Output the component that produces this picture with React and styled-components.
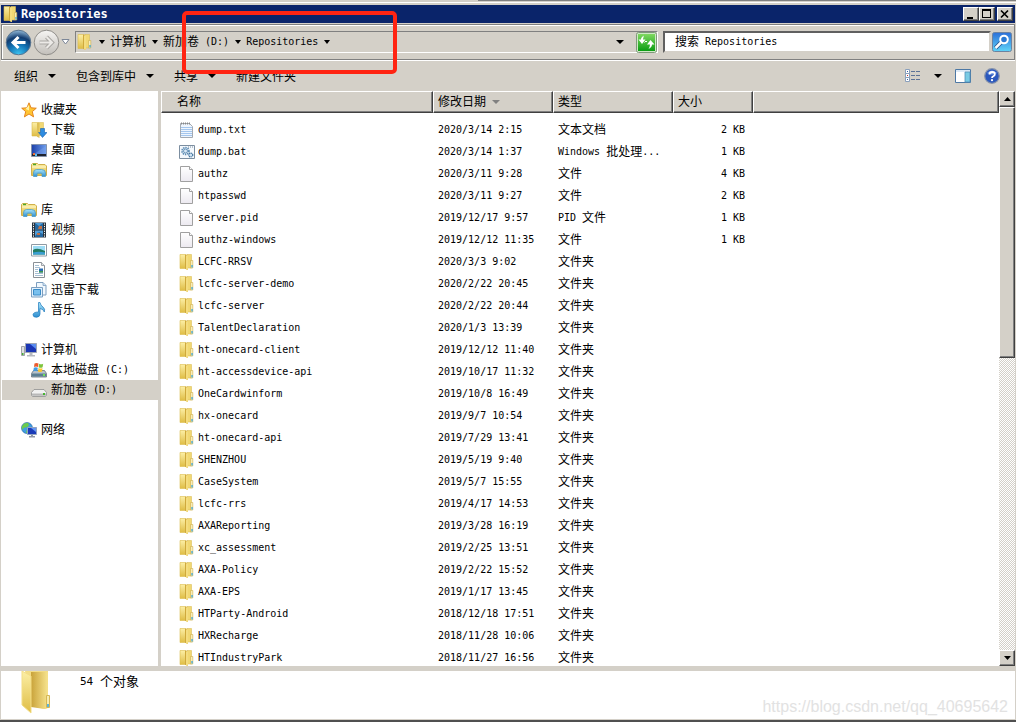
import React, { useState } from "react";
import styled, { createGlobalStyle, css } from "styled-components";

const face = "#d4d0c8";
const latin = `"DejaVu Sans Mono", "Noto Sans CJK SC", monospace`;
const cjk = `"Noto Sans CJK SC", sans-serif`;

const raised = css`
  border: 1px solid;
  border-color: #fff #404040 #404040 #fff;
  box-shadow: inset -1px -1px 0 #808080;
`;

const GlobalStyle = createGlobalStyle`
  * {
    box-sizing: border-box;
  }
  body {
    margin: 0;
    background: #fff;
    color: #000;
    font: 10px/20px ${latin};
  }
  button {
    padding: 0;
    border: 0;
    background: none;
    color: inherit;
    font: inherit;
  }
  svg {
    display: block;
    flex: none;
  }
`;

const Han = styled.span`
  font-family: ${cjk};
  font-size: ${({ $size }) => $size}px;
  line-height: 1;
  vertical-align: -1px;
`;

// half-width latin next to full-width chinese, like the system bitmap font
const Text = ({ children, size = 12 }) =>
  children
    .split(/([\u4e00-\u9fff]+)/)
    .map((part, i) => (i % 2 ? <Han key={i} $size={size}>{part}</Han> : part));

/* ---------- icons ---------- */

const HiddenSvg = styled.svg`
  position: absolute;
`;

const Gradient = ({ id, from, to, flat }) => (
  <linearGradient id={id} x1="0" y1="0" x2={flat ? 1 : 0} y2={flat ? 0 : 1}>
    <stop offset="0" stopColor={from} />
    <stop offset="1" stopColor={to} />
  </linearGradient>
);

const Defs = () => (
  <HiddenSvg width="0" height="0" aria-hidden="true">
    <defs>
      <Gradient id="gold" from="#fcefa6" to="#dfbd45" />
      <Gradient id="goldFlat" from="#c9a33a" to="#f6e28c" flat />
      <Gradient id="sky" from="#a8e4fa" to="#2f8fd0" />
      <Gradient id="screen" from="#1c3fa8" to="#6f9fee" flat />
      <Gradient id="paper" from="#ffffff" to="#ece9f0" />
      <Gradient id="metal" from="#f4f4f4" to="#9a9a9a" />
      <Gradient id="green" from="#7fd860" to="#0a9d12" />
      <Gradient id="search" from="#2c6fd8" to="#5fd4f8" />
      <Gradient id="grayBall" from="#f6f5f3" to="#c2bfba" />
      <radialGradient id="blueBall" cx=".5" cy="1" r=".95">
        <stop offset="0" stopColor="#3fc8f4" />
        <stop offset=".45" stopColor="#1273b4" />
        <stop offset=".75" stopColor="#123c70" />
        <stop offset="1" stopColor="#7ea6c8" />
      </radialGradient>
    </defs>
  </HiddenSvg>
);

const Icon = ({ children, size = 16 }) => (
  <svg width={size} height={size} viewBox="0 0 16 16" aria-hidden="true">
    {children}
  </svg>
);

const FolderIcon = () => (
  <Icon>
    <path d="M8 .5h4.5v13.5H8z" fill="#f1d873" stroke="#dcc05b" strokeWidth=".6" />
    <path d="M1 .5h5.500v14H1z" fill="url(#gold)" stroke="#dcbc4c" strokeWidth=".6" />
    <path d="M6 .5 9 1v15l-3-1.300z" fill="#cfa93c" />
    <path d="M7 1.500 9 1v15l-2-.8z" fill="#f4dd80" />
    <path d="M11.500 6.500h2.300v7.500h-2.300z" fill="#f8edb8" stroke="#cfae4b" strokeWidth=".6" />
    <path d="M12.300 11h1.500v2.500h-1.500z" fill="#54acd0" />
  </Icon>
);

const LibraryIcon = () => (
  <Icon>
    <path d="M.5 13.5v-11l1-1h5l1 1h6.5l1.5 1.5v9.5z" fill="url(#gold)" stroke="#d0b04c" />
    <path d="M2 2.5h3" stroke="#4ba82a" strokeWidth="1.4" />
    <path d="M1 5h14" stroke="#fff8cf" />
    <path
      d="M2.500 14.500V11q0-3.500 3-3.500h5q4 0 4 3.500v3.500H11V12q0-.8-1-.8H7q-1 0-1 .8v2.500z"
      fill="url(#sky)"
      stroke="#4c9cc6"
      strokeWidth=".8"
    />
  </Icon>
);

const StarIcon = () => (
  <Icon>
    <path
      d="M8 .8l2.100 5 5.200.4-4 3.400 1.300 5.300L8 12l-4.600 2.900 1.300-5.300-4-3.400 5.200-.4z"
      fill="#ffc533"
      stroke="#e07c14"
      strokeWidth=".9"
    />
    <path d="M8 3v5.500L4.600 7z" fill="#fff3a8" />
  </Icon>
);

const DownloadIcon = () => (
  <Icon>
    <path d="M7 .5h5.500v13H7z" fill="#f1d873" stroke="#dcc05b" strokeWidth=".6" />
    <path d="M1 .5h5.500v13.500H1z" fill="url(#gold)" stroke="#d8b848" strokeWidth=".6" />
    <path d="M6 .5 8.500 1v15L6 14.700z" fill="#dfc056" />
    <path d="M9.500 6.500h4v4H16L11.500 15.500 7.500 10.500h2z" fill="#2d8be0" stroke="#1a62ae" strokeWidth=".6" />
  </Icon>
);

const DesktopIcon = () => (
  <Icon>
    <path d="M.5 2.500h15v12H.5z" fill="url(#screen)" stroke="#8594ad" />
    <path d="M6 10 15 4v8H3z" fill="#7fa8ee" opacity=".4" />
    <path d="M1 12h14v2H1z" fill="#20242e" />
    <path d="M2 11h2v2H2z" fill="#ef7136" />
    <path d="M4 12h2v2H4z" fill="#58c0ef" />
  </Icon>
);

const VideoIcon = () => (
  <Icon>
    <path d="M1 .5h14v15H1z" fill="#28333e" />
    <path d="M4 1h8v6.500H4zM4 8.500h8V15H4z" fill="#4f9dd8" />
    <path d="M4 1l4 3 4-3v6H4zM4 14l4-4 4 2v3H4z" fill="#24679f" />
    <path d="M8 4h3v3H7zM6 11h3v2H6z" fill="#c37045" />
    <path d="M2.500 1.500v14M13.500 1.500v14" stroke="#fff" strokeDasharray="1.200 1.200" />
  </Icon>
);

const PictureIcon = () => (
  <Icon>
    <path d="M.5 2.500h15v11.500H.5z" fill="#fff" stroke="#8e9aa4" />
    <path d="M2 4h12v8.500H2z" fill="#9ddcf6" />
    <path d="M2 8q4-3 12 1v3.500H2z" fill="#227c62" />
    <path d="M2 10.500q6-1.500 12 0v2H2z" fill="#3a9ed2" />
  </Icon>
);

const DocumentIcon = () => (
  <Icon>
    <path d="M2.500.5h8l3 3v12h-11z" fill="#fff" stroke="#8a9096" />
    <path d="M10.500.5v3h3" fill="#dfe4e8" stroke="#8a9096" strokeWidth=".8" />
    <path d="M4 3.500h4M4 5.500h5M4 7.500h3M4 9.500h3M4 11.500h8M4 13.500h8" stroke="#a6bed2" />
    <path d="M8 6.500h4v4H8z" fill="#2a6cb4" />
    <path d="M8 9h4v1.500H8z" fill="#3c9750" />
  </Icon>
);

const ThunderIcon = () => (
  <Icon>
    <path d="M5.500 .5h6.500l3 3v9.500h-9.500z" fill="#f1f8fe" stroke="#7d9fc0" />
    <path d="M12 .5v3h3" fill="#cfe2f4" stroke="#7d9fc0" strokeWidth=".8" />
    <path d="M.5 5.500h11v9.500H.5z" fill="#e2f1fd" stroke="#7d9fc0" />
    <path d="M2.500 7.500h7v5.500h-7z" fill="#79c0ee" stroke="#3b8cc8" />
  </Icon>
);

const MusicIcon = () => (
  <Icon>
    <path d="M7.500.5h1.500q.5 3 3 4.500 2.500 2 1.300 5-.6-2.800-4.300-3.500V12q0 3-3.500 3.300Q2 15.300 2 12.800q.3-2.800 5.500-2.800z" fill="url(#sky)" stroke="#1c78bc" strokeWidth=".7" />
  </Icon>
);

const ComputerIcon = () => (
  <Icon>
    <path d="M.5 4.500h3v9h-3z" fill="#dedfe2" stroke="#8d9096" strokeWidth=".8" />
    <path d="M1 11h1.500v2H1z" fill="#43ad32" />
    <path d="M4.500 1.500h11v9h-11z" fill="#1b36b4" stroke="#9ea5b4" />
    <path d="M9 2h6v5z" fill="#5a8cf0" />
    <path d="M8.500 11h3v2h-3zM6 13h8v1.500H6z" fill="#b6b9c0" />
  </Icon>
);

const SystemDriveIcon = () => (
  <Icon>
    <path d="M2.500 8.500h11l2 3v3.500H.5v-3.500z" fill="#b5c0c9" stroke="#66727b" strokeWidth=".8" />
    <path d="M1 11.500h14v3H1z" fill="#5b7e92" />
    <path d="M12 12h2v2h-2z" fill="#6fe05a" />
    <path d="M3.500 1.500Q5.500.3 7.500 1.500L7 5Q5 4 3 5z" fill="#ec5a2c" />
    <path d="M8.200 1.800q2 1 4 0l-.6 3.400q-2 1-4 0z" fill="#7ec43c" />
    <path d="M2.800 5.700q2-1 4 0l-.5 3.500q-2-1-4 0z" fill="#3f9be4" />
    <path d="M7.500 6q2 1 4 0L11 9.500q-2 1-4 0z" fill="#fbc62c" />
  </Icon>
);

const DriveIcon = () => (
  <Icon>
    <path d="M3 7.500h10l2.500 3v3l-1 1h-13l-1-1v-3z" fill="#f0f0f0" stroke="#8f8f8f" strokeWidth=".8" />
    <path d="M1 10.500h14v3H1z" fill="url(#metal)" />
    <path d="M12 11h2v2h-2z" fill="#46b52f" />
  </Icon>
);

const NetworkIcon = () => (
  <Icon>
    <circle cx="6" cy="6" r="5.500" fill="#3f9de2" stroke="#2460a0" strokeWidth=".6" />
    <path d="M3 1.500l4-.8 1 2.500-2 2-3 .5L1 8 .8 4.500zM6 7l3 1-1 3H5z" fill="#6ccb4c" />
    <path d="M6.500 5.500h9v7h-9z" fill="#1b3bb8" stroke="#93a3c0" />
    <path d="M10 6h5v4z" fill="#6397f4" />
    <path d="M10 13h2v1.500h-2zM8 14h6v1.500H8z" fill="#8f97a6" />
  </Icon>
);

const FileIcon = () => (
  <Icon>
    <path d="M1.500.5h9l3 3v12h-12z" fill="url(#paper)" stroke="#a0a0a0" />
    <path d="M10.500.5v3h3" fill="#fff" stroke="#a0a0a0" />
  </Icon>
);

const TextFileIcon = () => (
  <Icon>
    <path d="M1.500 1.500h9l3 3v11h-12z" fill="#eef5fd" stroke="#a4aab2" />
    <path d="M2 1.500h9" stroke="#888" strokeWidth="2" strokeDasharray="1 1" />
    <path d="M2 5.500h11M2 7.500h11M2 9.500h11M2 11.500h11M2 13.500h11" stroke="#a4c6ee" />
  </Icon>
);

const BatchIcon = () => (
  <Icon>
    <path d="M.5 1.500h15v13H.5z" fill="#f5f9fd" stroke="#7c8ea0" />
    <path d="M9 3h6" stroke="#7c8ea0" strokeDasharray="1 1" />
    <circle cx="6.500" cy="7" r="3.400" fill="none" stroke="#5d8db6" strokeWidth="1.800" strokeDasharray="1.400 .8" />
    <circle cx="6.500" cy="7" r="2" fill="#d8e8f6" stroke="#4f80aa" strokeWidth=".8" />
    <circle cx="11.800" cy="11" r="2" fill="#cfe2f2" stroke="#3f719c" strokeWidth="1.200" strokeDasharray="1.200 .5" />
  </Icon>
);

const LargeFolderIcon = () => (
  <svg width="30" height="43" viewBox="0 0 30 43" aria-hidden="true">
    <path d="M4 0h23v37l-3 1-14-3z" fill="#f3dd86" />
    <path d="M10 1h16.500v36l-3 1L10 36z" fill="url(#goldFlat)" />
    <path d="M25.500 24.500h3v12h-3z" fill="#f8ecb0" stroke="#d5b755" />
    <path d="M26 33h2v3h-2z" fill="#58b4dc" />
    <path d="M1 0l9 5v37L1 34z" fill="url(#gold)" stroke="#f3dd86" />
  </svg>
);

const DownArrow = ({ width = 7, color = "#000" }) => (
  <svg width={width} height="4" viewBox="0 0 7 4" preserveAspectRatio="none" aria-hidden="true">
    <path d="M0 0h7L3.500 4z" fill={color} />
  </svg>
);

const NavArrows = ({ forward }) => (
  <svg width="27" height="27" viewBox="0 0 27 27" aria-hidden="true">
    <circle
      cx="13.500"
      cy="13.500"
      r="12.300"
      fill={forward ? "url(#grayBall)" : "url(#blueBall)"}
      stroke={forward ? "#8f8d89" : "#5b7690"}
    />
    <path
      d={forward ? "M6.500 13.500h12M13.500 8l5.500 5.500-5.500 5.500" : "M20.500 13.500h-12M13.500 8 8 13.500l5.500 5.500"}
      fill="none"
      stroke={forward ? "#a9a7a3" : "#fff"}
      strokeWidth={forward ? 4 : 3}
    />
    {forward && (
      <path d="M6.500 13.500h12M13.500 8l5.500 5.500-5.500 5.500" fill="none" stroke="#eceae7" strokeWidth="2" />
    )}
  </svg>
);

const RefreshIcon = () => (
  <svg width="21" height="21" viewBox="0 0 21 21" aria-hidden="true">
    <rect x=".5" y=".5" width="20" height="20" rx="2" fill="#cfe8c6" stroke="#7d9a78" />
    <rect x="2" y="2" width="17" height="17" fill="url(#green)" />
    <path d="M7 4.500v3h2.500L6 12 2.500 7.500H5q0-2.500 3-4z" fill="#fff" />
    <path d="M8 3.500 5 7v2h2V7z" fill="#fff" />
    <path d="M14.500 8 18.500 12.500H16q0 2.500-3.500 4.500 1.500-2.500 1.500-4.500h-3z" fill="#fff" />
    <path d="M8.500 10.500 10 9l1 1" fill="none" stroke="#fff" />
  </svg>
);

const MagnifierIcon = () => (
  <svg width="20" height="20" viewBox="0 0 20 20" aria-hidden="true">
    <rect x=".5" y=".5" width="19" height="19" rx="2" fill="url(#search)" stroke="#6d83a0" />
    <path d="M3.500 16 9 10.500" stroke="#24508c" strokeWidth="4" />
    <path d="M3.500 16 9 10.500" stroke="#fff" strokeWidth="2.500" />
    <circle cx="12" cy="7.500" r="3.800" fill="#2a79d2" stroke="#fff" strokeWidth="2" />
  </svg>
);

const DetailsIcon = () => (
  <Icon>
    <path d="M.5 1.500h4v4h-4zM.5 5.500h4v4h-4zM.5 9.500h4v4h-4z" fill="#fff" stroke="#8aa0bc" />
    <path d="M2 3.500h1M2 11.500h1" stroke="#3b62a8" />
    <path d="M2 7.500h1" stroke="#c03028" />
    <path d="M6 3.500h4M11 3.500h4M6 7.500h4M11 7.500h4M6 11.500h4M11 11.500h4" stroke="#5d7396" />
  </Icon>
);

const PreviewPaneIcon = () => (
  <Icon>
    <path d="M.5 1.500h15v13H.5z" fill="#fff" stroke="#4d78a4" />
    <path d="M1 2h14v2H1z" fill="#dce9f6" />
    <path d="M10 4h5v10h-5z" fill="#79cbe4" stroke="#5091b8" strokeWidth=".8" />
  </Icon>
);

const HelpIcon = () => (
  <Icon>
    <circle cx="8" cy="8" r="7.300" fill="#2b58bd" stroke="#8793ab" strokeWidth="1.200" />
    <path d="M3 5Q8 0 13 5q-5 3-10 0z" fill="#7ca2e8" />
    <path d="M5.500 6.500q0-2.500 2.700-2.500t2.600 2.200q0 1.400-1.500 2.100Q8 9 8 10" fill="none" stroke="#fff" strokeWidth="1.800" />
    <circle cx="8" cy="12.200" r="1.100" fill="#fff" />
  </Icon>
);

/* ---------- window ---------- */

const Window = styled.div`
  position: relative;
  display: flex;
  flex-direction: column;
  height: 100vh;
  min-height: 400px;
  overflow: hidden;
`;

const Edge = styled.div`
  flex: none;
  height: 5px;
  border-bottom: 2px solid ${face};
  background: linear-gradient(${face} 2px, #fff 2px);

  &::before {
    content: "";
    display: block;
    height: 1px;
    margin-left: 47%;
    background: #808080;
  }
`;

const Frame = styled.div`
  display: flex;
  flex: 1;
  flex-direction: column;
  min-height: 0;
  margin-bottom: 3px;
  padding: 0 1px 1px;
  border-bottom: 2px solid #505050;
  background: ${face};
`;

const TitleBar = styled.header`
  display: flex;
  flex: none;
  align-items: center;
  height: 18px;
  margin-bottom: 1px;
  padding: 0 2px;
  background: #0a246a;
  color: #fff;
`;

const Title = styled.h1`
  flex: 1;
  margin: 0 2px;
  font-size: 12px;
  line-height: 18px;
`;

const WindowButton = styled.button`
  ${raised}
  display: grid;
  place-items: center;
  width: 16px;
  height: 14px;
  margin-left: ${({ $apart }) => ($apart ? 2 : 0)}px;
  background: ${face};
`;

const NavBar = styled.nav`
  display: flex;
  flex: none;
  align-items: center;
  height: 36px;
  padding: 0 2px 0 3px;
  border: 1px solid #808080;
  box-shadow: inset 1px 1px 0 #fff, 0 1px 0 #fff;
`;

const Travel = styled.div`
  display: flex;
  align-items: center;
  width: 70px;
  gap: 1px;
`;

const AddressBar = styled.div`
  display: flex;
  flex: 1;
  align-items: center;
  height: 22px;
  padding-left: 1px;
  border: 1px solid;
  border-color: #808080 #fff #fff #808080;
`;

const Crumb = styled.button`
  white-space: pre;
`;

const CrumbArrow = styled.button`
  display: grid;
  place-items: center;
  width: 17px;
  height: 20px;
`;

const AddressTools = styled.div`
  display: flex;
  align-items: center;
  gap: 12px;
  margin-left: auto;
`;

const SearchBox = styled.form`
  display: grid;
  grid-template-columns: 1fr 20px;
  align-items: center;
  gap: 1px;
  width: 349px;
  margin-left: 5px;
`;

const SearchInput = styled.input`
  grid-area: 1 / 1;
  width: 100%;
  height: 22px;
  padding: 0 10px;
  border: 2px solid;
  border-color: #606060 ${face} ${face} #606060;
  background: #fff;
  font: inherit;
  outline: 0;
`;

const SearchHint = styled.label`
  grid-area: 1 / 1;
  padding-left: 12px;
  cursor: text;

  ${SearchInput}:not(:placeholder-shown) + & {
    visibility: hidden;
  }
`;

const CommandBar = styled.div`
  display: flex;
  flex: none;
  align-items: center;
  gap: 20px;
  height: 31px;
  padding: 0 15px 0 13px;
`;

const Command = styled.button`
  display: flex;
  align-items: center;
  gap: 10px;
`;

const ViewTools = styled.div`
  display: flex;
  gap: 13px;
  margin-left: auto;
`;

const Body = styled.div`
  display: grid;
  flex: 1;
  grid-template-columns: 157px minmax(0, 1fr);
  grid-template-rows: minmax(0, 1fr);
  gap: 3px;
  min-height: 0;
`;

const Sidebar = styled.aside`
  overflow: hidden;
  padding: 9px 0 0 1px;
  background: #fff;
`;

const Group = styled.ul`
  margin: 0 0 20px;
  padding: 0;
  list-style: none;
`;

const Place = styled.a`
  display: flex;
  align-items: center;
  gap: 4px;
  height: 20px;
  padding-left: ${({ $root }) => ($root ? 19 : 29)}px;
  background: ${({ $selected }) => ($selected ? face : "none")};
  color: inherit;
  text-decoration: none;
  white-space: pre;
`;

const ListPane = styled.main`
  display: flex;
  min-width: 0;
  min-height: 0;
  background: #fff;
`;

const ListView = styled.div`
  flex: 1;
  min-width: 0;
  overflow: hidden;
`;

const Table = styled.table`
  width: 100%;
  border-collapse: separate;
  border-spacing: 0;
  table-layout: fixed;

  tbody::before {
    content: "";
    display: block;
    height: 6px;
  }
`;

const Heading = styled.th`
  ${raised}
  width: ${({ $width }) => ($width ? `${$width}px` : "auto")};
  height: 22px;
  padding: 0 0 0 ${({ $first }) => ($first ? 15 : 4)}px;
  background: ${face};
  font-weight: normal;
  line-height: 18px;
  text-align: left;
`;

const SortMark = styled.span`
  display: inline-block;
  margin-left: 6px;
  vertical-align: middle;
`;

const Cell = styled.td`
  height: 22px;
  padding: 0 ${({ $right }) => ($right ? 8 : 0)}px 0 5px;
  line-height: 20px;
  text-align: ${({ $right }) => ($right ? "right" : "left")};
  white-space: pre;
`;

const FileName = styled.div`
  display: flex;
  align-items: center;
  gap: 3px;
  height: 20px;
  padding-left: 13px;
`;

const ScrollBar = styled.div`
  display: flex;
  flex-direction: column;
  width: 16px;
  background: repeating-conic-gradient(${face} 0 25%, #fff 0 50%) 0 0 / 2px 2px;
`;

const ScrollButton = styled.button`
  ${raised}
  display: grid;
  place-items: center;
  flex: none;
  height: 16px;
  background: ${face};

  svg {
    transform: ${({ $up }) => ($up ? "rotate(180deg)" : "none")};
  }
`;

const Track = styled.div`
  flex: 1;
`;

const Thumb = styled.div`
  ${raised}
  background: ${face};
`;

const DetailsPane = styled.footer`
  display: flex;
  flex: none;
  gap: 29px;
  height: 48px;
  margin-top: 5px;
  padding-left: 20px;
  background: #fff;
`;

const ItemCount = styled.p`
  margin: 1px 0 0;
  font-size: 11px;
`;

const Highlight = styled.div`
  position: absolute;
  top: 11px;
  left: 182px;
  width: 215px;
  height: 63px;
  border: 4px solid #ff2412;
  border-radius: 5px;
  pointer-events: none;
`;

const Watermark = styled.div`
  position: absolute;
  right: 8px;
  bottom: 8px;
  color: #e2e2e2;
  font: 16px/20px "Liberation Sans", sans-serif;
`;

const places = [
  [
    ["收藏夹", StarIcon],
    ["下载", DownloadIcon],
    ["桌面", DesktopIcon],
    ["库", LibraryIcon],
  ],
  [
    ["库", LibraryIcon],
    ["视频", VideoIcon],
    ["图片", PictureIcon],
    ["文档", DocumentIcon],
    ["迅雷下载", ThunderIcon],
    ["音乐", MusicIcon],
  ],
  [
    ["计算机", ComputerIcon],
    ["本地磁盘 (C:)", SystemDriveIcon],
    ["新加卷 (D:)", DriveIcon],
  ],
  [["网络", NetworkIcon]],
];

const files = [
  ["dump.txt", "2020/3/14 2:15", "文本文档", "2 KB", TextFileIcon],
  ["dump.bat", "2020/3/14 1:37", "Windows 批处理...", "1 KB", BatchIcon],
  ["authz", "2020/3/11 9:28", "文件", "4 KB", FileIcon],
  ["htpasswd", "2020/3/11 9:27", "文件", "2 KB", FileIcon],
  ["server.pid", "2019/12/17 9:57", "PID 文件", "1 KB", FileIcon],
  ["authz-windows", "2019/12/12 11:35", "文件", "1 KB", FileIcon],
  ["LCFC-RRSV", "2020/3/3 9:02"],
  ["lcfc-server-demo", "2020/2/22 20:45"],
  ["lcfc-server", "2020/2/22 20:44"],
  ["TalentDeclaration", "2020/1/3 13:39"],
  ["ht-onecard-client", "2019/12/12 11:40"],
  ["ht-accessdevice-api", "2019/10/17 11:32"],
  ["OneCardwinform", "2019/10/8 16:49"],
  ["hx-onecard", "2019/9/7 10:54"],
  ["ht-onecard-api", "2019/7/29 13:41"],
  ["SHENZHOU", "2019/5/19 9:40"],
  ["CaseSystem", "2019/5/7 15:55"],
  ["lcfc-rrs", "2019/4/17 14:53"],
  ["AXAReporting", "2019/3/28 16:19"],
  ["xc_assessment", "2019/2/25 13:51"],
  ["AXA-Policy", "2019/2/22 15:52"],
  ["AXA-EPS", "2019/1/17 13:45"],
  ["HTParty-Android", "2018/12/18 17:51"],
  ["HXRecharge", "2018/11/28 10:06"],
  ["HTIndustryPark", "2018/11/27 16:56"],
];

const Row = ({ file }) => {
  const [name, date, type = "文件夹", size = "", FileTypeIcon = FolderIcon] = file;
  return (
    <tr>
      <Cell>
        <FileName>
          <FileTypeIcon />
          {name}
        </FileName>
      </Cell>
      <Cell>{date}</Cell>
      <Cell>
        <Text>{type}</Text>
      </Cell>
      <Cell $right>{size}</Cell>
      <Cell />
    </tr>
  );
};

const App = () => {
  const [selected, setSelected] = useState("新加卷 (D:)");

  return (
    <Window>
      <GlobalStyle />
      <Defs />
      <Edge />
      <Frame>
        <TitleBar>
          <FolderIcon />
          <Title>Repositories</Title>
          <WindowButton aria-label="最小化">
            <svg width="10" height="10" viewBox="0 0 10 10">
              <path d="M1 8h6v2H1z" />
            </svg>
          </WindowButton>
          <WindowButton aria-label="最大化">
            <svg width="10" height="10" viewBox="0 0 10 10">
              <path d="M0 0h9v9H0zM1 2v6h7V2z" fillRule="evenodd" />
            </svg>
          </WindowButton>
          <WindowButton $apart aria-label="关闭">
            <svg width="10" height="10" viewBox="0 0 10 10">
              <path d="M1 1.500l7 7M8 1.500l-7 7" stroke="#000" strokeWidth="1.700" />
            </svg>
          </WindowButton>
        </TitleBar>

        <NavBar>
          <Travel>
            <button aria-label="后退">
              <NavArrows />
            </button>
            <button aria-label="前进">
              <NavArrows forward />
            </button>
            <button aria-label="最近浏览的位置">
              <svg width="9" height="6" viewBox="0 0 9 6">
                <path d="M1 .5h7L4.500 5z" fill="#fff" stroke="#7c8798" />
              </svg>
            </button>
          </Travel>
          <AddressBar>
            <FolderIcon />
            {["", "计算机", "新加卷 (D:)", "Repositories"].map((crumb) => (
              <React.Fragment key={crumb}>
                {crumb && (
                  <Crumb>
                    <Text>{crumb}</Text>
                  </Crumb>
                )}
                <CrumbArrow aria-label="展开">
                  <DownArrow width={6} />
                </CrumbArrow>
              </React.Fragment>
            ))}
            <AddressTools>
              <button aria-label="以前的位置">
                <DownArrow width={8} />
              </button>
              <button aria-label="刷新">
                <RefreshIcon />
              </button>
            </AddressTools>
          </AddressBar>
          <SearchBox onSubmit={(e) => e.preventDefault()}>
            <SearchInput id="search" placeholder=" " autoComplete="off" />
            <SearchHint htmlFor="search">
              <Text>搜索 Repositories</Text>
            </SearchHint>
            <button aria-label="搜索">
              <MagnifierIcon />
            </button>
          </SearchBox>
        </NavBar>

        <CommandBar>
          {["组织", "包含到库中", "共享"].map((label) => (
            <Command key={label}>
              <Han $size={12}>{label}</Han>
              <DownArrow width={8} />
            </Command>
          ))}
          <Command>
            <Han $size={12}>新建文件夹</Han>
          </Command>
          <ViewTools>
            <Command aria-label="更改视图">
              <DetailsIcon />
            </Command>
            <Command aria-label="更多选项">
              <DownArrow width={8} />
            </Command>
            <Command aria-label="预览窗格">
              <PreviewPaneIcon />
            </Command>
            <Command aria-label="帮助">
              <HelpIcon />
            </Command>
          </ViewTools>
        </CommandBar>

        <Body>
          <Sidebar>
            {places.map((group, g) => (
              <Group key={g}>
                {group.map(([name, PlaceIcon], i) => (
                  <li key={name}>
                    <Place
                      href="#"
                      $root={i === 0}
                      $selected={name === selected}
                      onClick={() => setSelected(name)}
                    >
                      <PlaceIcon />
                      <span>
                        <Text>{name}</Text>
                      </span>
                    </Place>
                  </li>
                ))}
              </Group>
            ))}
          </Sidebar>

          <ListPane>
            <ListView>
              <Table>
                <thead>
                  <tr>
                    <Heading $width={272} $first>
                      <Text>名称</Text>
                    </Heading>
                    <Heading $width={120}>
                      <Text>修改日期</Text>
                      <SortMark>
                        <DownArrow width={8} color="#808080" />
                      </SortMark>
                    </Heading>
                    <Heading $width={120}>
                      <Text>类型</Text>
                    </Heading>
                    <Heading $width={80}>
                      <Text>大小</Text>
                    </Heading>
                    <Heading />
                  </tr>
                </thead>
                <tbody>
                  {files.map((file) => (
                    <Row key={file[0]} file={file} />
                  ))}
                </tbody>
              </Table>
            </ListView>
            <ScrollBar>
              <ScrollButton $up aria-label="向上滚动">
                <DownArrow />
              </ScrollButton>
              <Track>
                <Thumb style={{ height: `${(files.length / 54) * 100}%` }} />
              </Track>
              <ScrollButton aria-label="向下滚动">
                <DownArrow />
              </ScrollButton>
            </ScrollBar>
          </ListPane>
        </Body>

        <DetailsPane>
          <LargeFolderIcon />
          <ItemCount>
            <Text size={13}>54 个对象</Text>
          </ItemCount>
        </DetailsPane>
      </Frame>
      <Highlight />
      <Watermark>https://blog.csdn.net/qq_40695642</Watermark>
    </Window>
  );
};

export default App;
